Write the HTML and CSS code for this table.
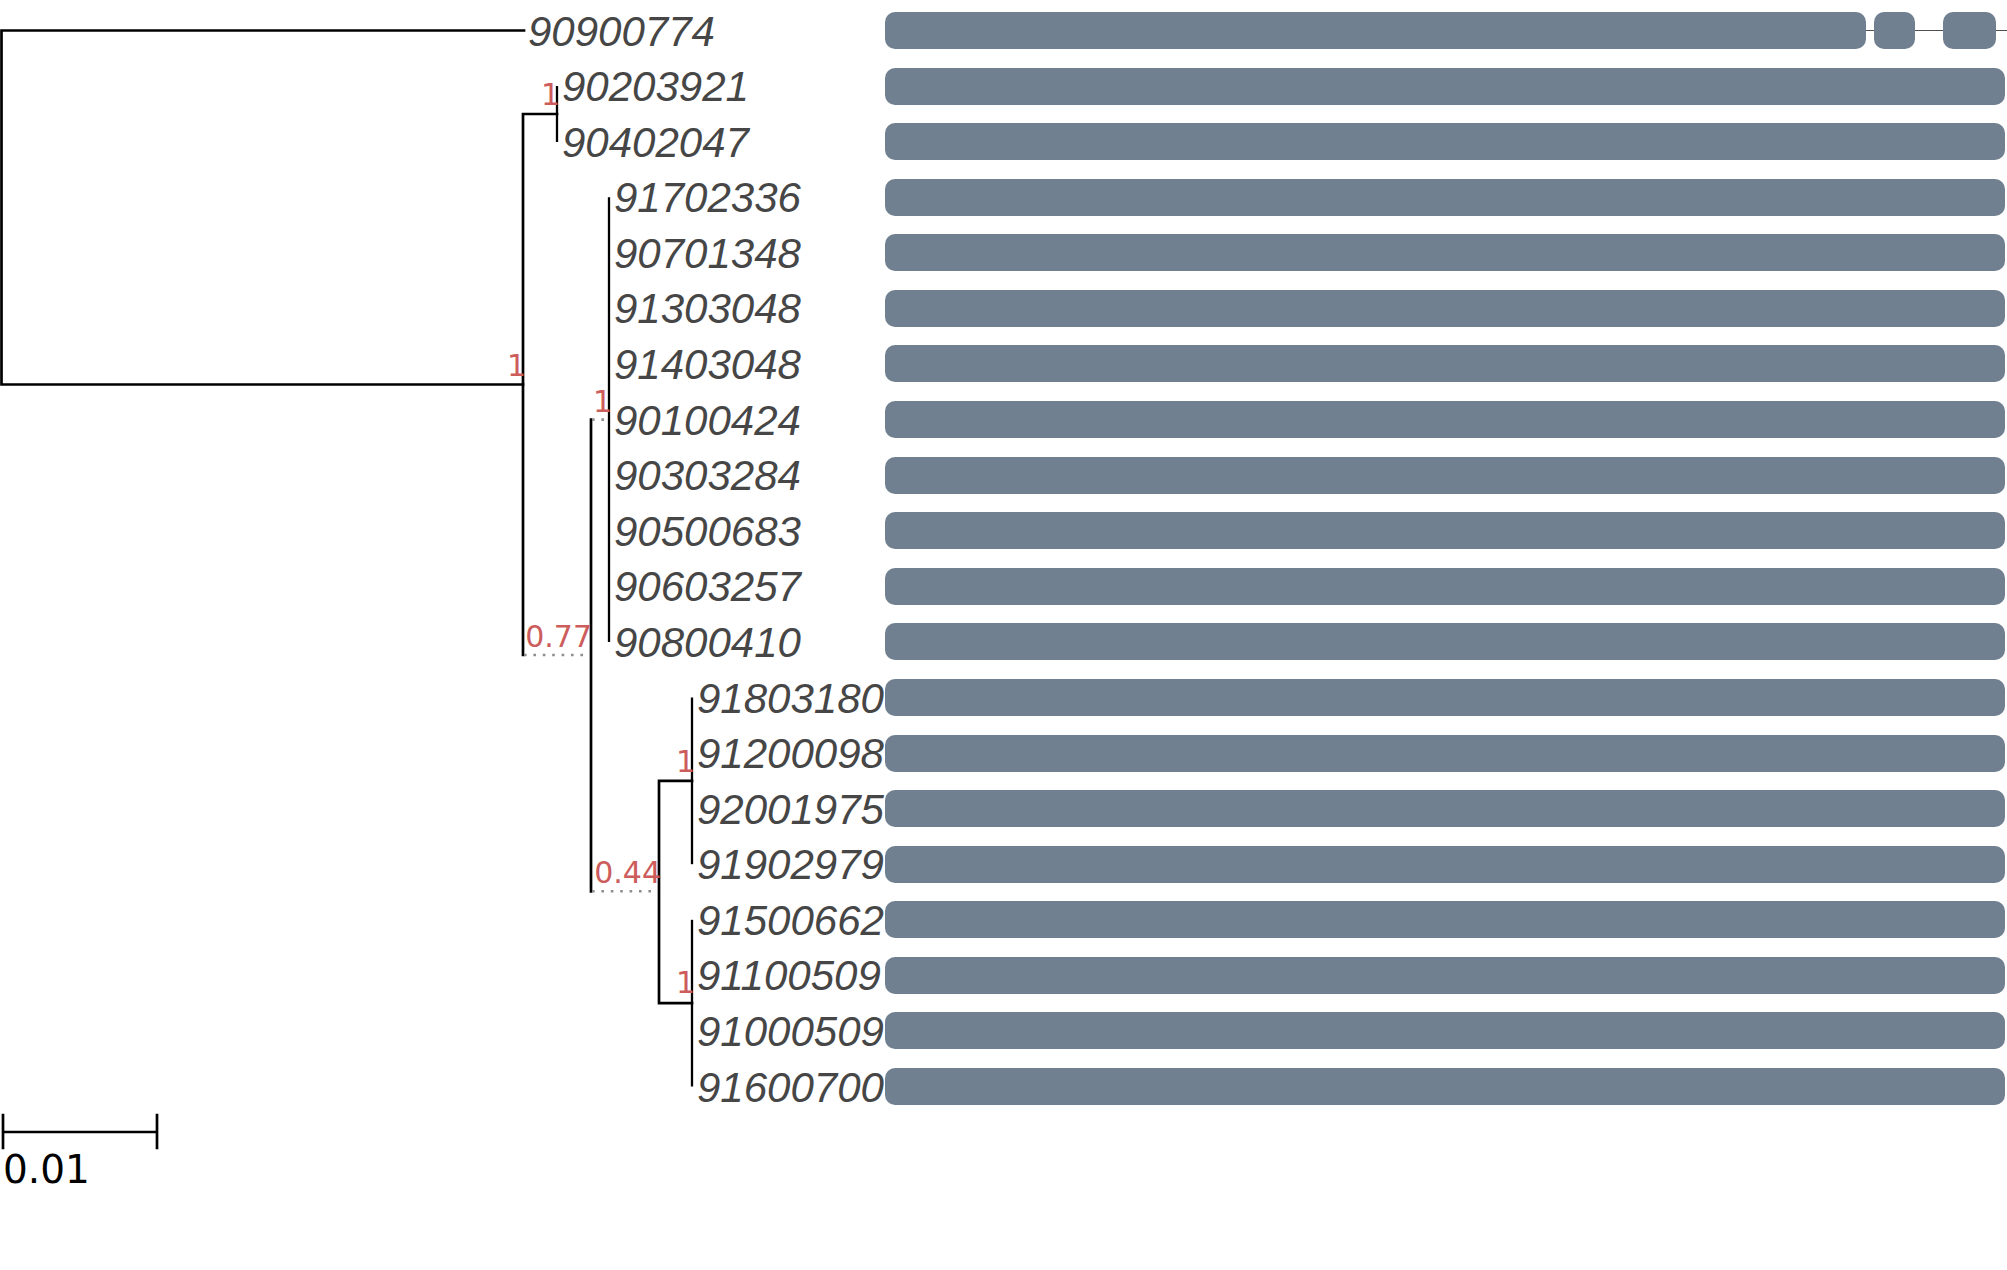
FILE: index.html
```html
<!DOCTYPE html>
<html lang="en">
<head>
<meta charset="utf-8">
<title>Tree</title>
<link rel="stylesheet" href="styles.css">
</head>
<body>
<div class="figure">
  <svg class="tree" width="885" height="1270" viewBox="0 0 885 1270">
    <g class="branches">
      <path class="branch" d="M524 30.5 H1.5 V384.5 H523"/>
      <path class="branch" d="M557 114 H523 V655"/>
      <path class="branch thin" d="M557 86 V142"/>
      <path class="branch" d="M591 419.6 V891.3"/>
      <path class="branch thin" d="M609 197.2 V641.9"/>
      <path class="branch" d="M692 780.8 H659 V1003.2 H692"/>
      <path class="branch thin" d="M692 697.5 V864.2"/>
      <path class="branch thin" d="M692 919.8 V1086.5"/>
      <path class="dotted" d="M524 655 H590"/>
      <path class="dotted" d="M592 419.6 H608"/>
      <path class="dotted" d="M592 891.3 H658"/>
    </g>
    <g class="leaves">
      <text class="leaf" x="528" y="45.5">90900774</text>
      <text class="leaf" x="562" y="101.1">90203921</text>
      <text class="leaf" x="562" y="156.7">90402047</text>
      <text class="leaf" x="614" y="212.2">91702336</text>
      <text class="leaf" x="614" y="267.8">90701348</text>
      <text class="leaf" x="614" y="323.4">91303048</text>
      <text class="leaf" x="614" y="379">91403048</text>
      <text class="leaf" x="614" y="434.6">90100424</text>
      <text class="leaf" x="614" y="490.1">90303284</text>
      <text class="leaf" x="614" y="545.7">90500683</text>
      <text class="leaf" x="614" y="601.3">90603257</text>
      <text class="leaf" x="614" y="656.9">90800410</text>
      <text class="leaf" x="697" y="712.5">91803180</text>
      <text class="leaf" x="697" y="768">91200098</text>
      <text class="leaf" x="697" y="823.6">92001975</text>
      <text class="leaf" x="697" y="879.2">91902979</text>
      <text class="leaf" x="697" y="934.8">91500662</text>
      <text class="leaf" x="697" y="990.4">91100509</text>
      <text class="leaf" x="697" y="1045.9">91000509</text>
      <text class="leaf" x="697" y="1101.5">91600700</text>
    </g>
    <g class="supports">
      <text class="support" x="526" y="376">1</text>
      <text class="support" x="560" y="105">1</text>
      <text class="support" x="592" y="647">0.77</text>
      <text class="support" x="612" y="412">1</text>
      <text class="support" x="661" y="883">0.44</text>
      <text class="support" x="695" y="772">1</text>
      <text class="support" x="695" y="993">1</text>
    </g>
    <g class="scale">
      <path class="branch" d="M3 1132 H157 M3 1115 V1148 M157 1115 V1148"/>
      <text class="scale-label" x="3" y="1183">0.01</text>
    </g>
  </svg>
  <div class="tracks">
    <div class="track">
      <div class="bar seg-a"></div>
      <div class="link link-a"></div>
      <div class="bar seg-b"></div>
      <div class="link link-b"></div>
      <div class="bar seg-c"></div>
      <div class="link link-end"></div>
    </div>
    <div class="track"><div class="bar full"></div></div>
    <div class="track"><div class="bar full"></div></div>
    <div class="track"><div class="bar full"></div></div>
    <div class="track"><div class="bar full"></div></div>
    <div class="track"><div class="bar full"></div></div>
    <div class="track"><div class="bar full"></div></div>
    <div class="track"><div class="bar full"></div></div>
    <div class="track"><div class="bar full"></div></div>
    <div class="track"><div class="bar full"></div></div>
    <div class="track"><div class="bar full"></div></div>
    <div class="track"><div class="bar full"></div></div>
    <div class="track"><div class="bar full"></div></div>
    <div class="track"><div class="bar full"></div></div>
    <div class="track"><div class="bar full"></div></div>
    <div class="track"><div class="bar full"></div></div>
    <div class="track"><div class="bar full"></div></div>
    <div class="track"><div class="bar full"></div></div>
    <div class="track"><div class="bar full"></div></div>
    <div class="track"><div class="bar full"></div></div>
  </div>
</div>
</body>
</html>
```

FILE: styles.css
```css
html, body {
  margin: 0;
  padding: 0;
  background: #ffffff;
}

.figure {
  display: flex;
  width: 2007px;
  height: 1270px;
  overflow: hidden;
}

.tree {
  flex: none;
  display: block;
  overflow: visible;
}

.branch {
  fill: none;
  stroke: #000000;
  stroke-width: 2.7px;
  stroke-linecap: square;
}

.branch.thin {
  stroke-width: 2.3px;
  stroke-linecap: butt;
}

.dotted {
  fill: none;
  stroke: #8e8e8e;
  stroke-width: 2.6px;
  stroke-dasharray: 2.6 6.8;
}

.leaf {
  font-family: "Liberation Sans", Arial, sans-serif;
  font-style: italic;
  font-size: 42px;
  fill: #464646;
}

.support {
  font-family: "DejaVu Sans", sans-serif;
  font-size: 30px;
  fill: #cd5c5c;
  text-anchor: end;
}

.scale-label {
  font-family: "DejaVu Sans", sans-serif;
  font-size: 39px;
  fill: #000000;
}

.tracks {
  flex: 1;
  display: flex;
  flex-direction: column;
  gap: 18.58px;
  padding-top: 12px;
}

.track {
  display: flex;
  align-items: center;
  height: 37px;
}

.bar {
  height: 37px;
  background: #708090;
  border-radius: 10px;
  flex: none;
}

.bar.full {
  flex: 1;
  margin-right: 2px;
}

.seg-a { width: 981px; }
.seg-b { width: 41px; }
.seg-c { width: 53px; }

.link {
  height: 1.5px;
  background: #505050;
  flex: none;
}

.link-a { width: 8px; }
.link-b { width: 28px; }
.link-end { flex: 1; }
```
